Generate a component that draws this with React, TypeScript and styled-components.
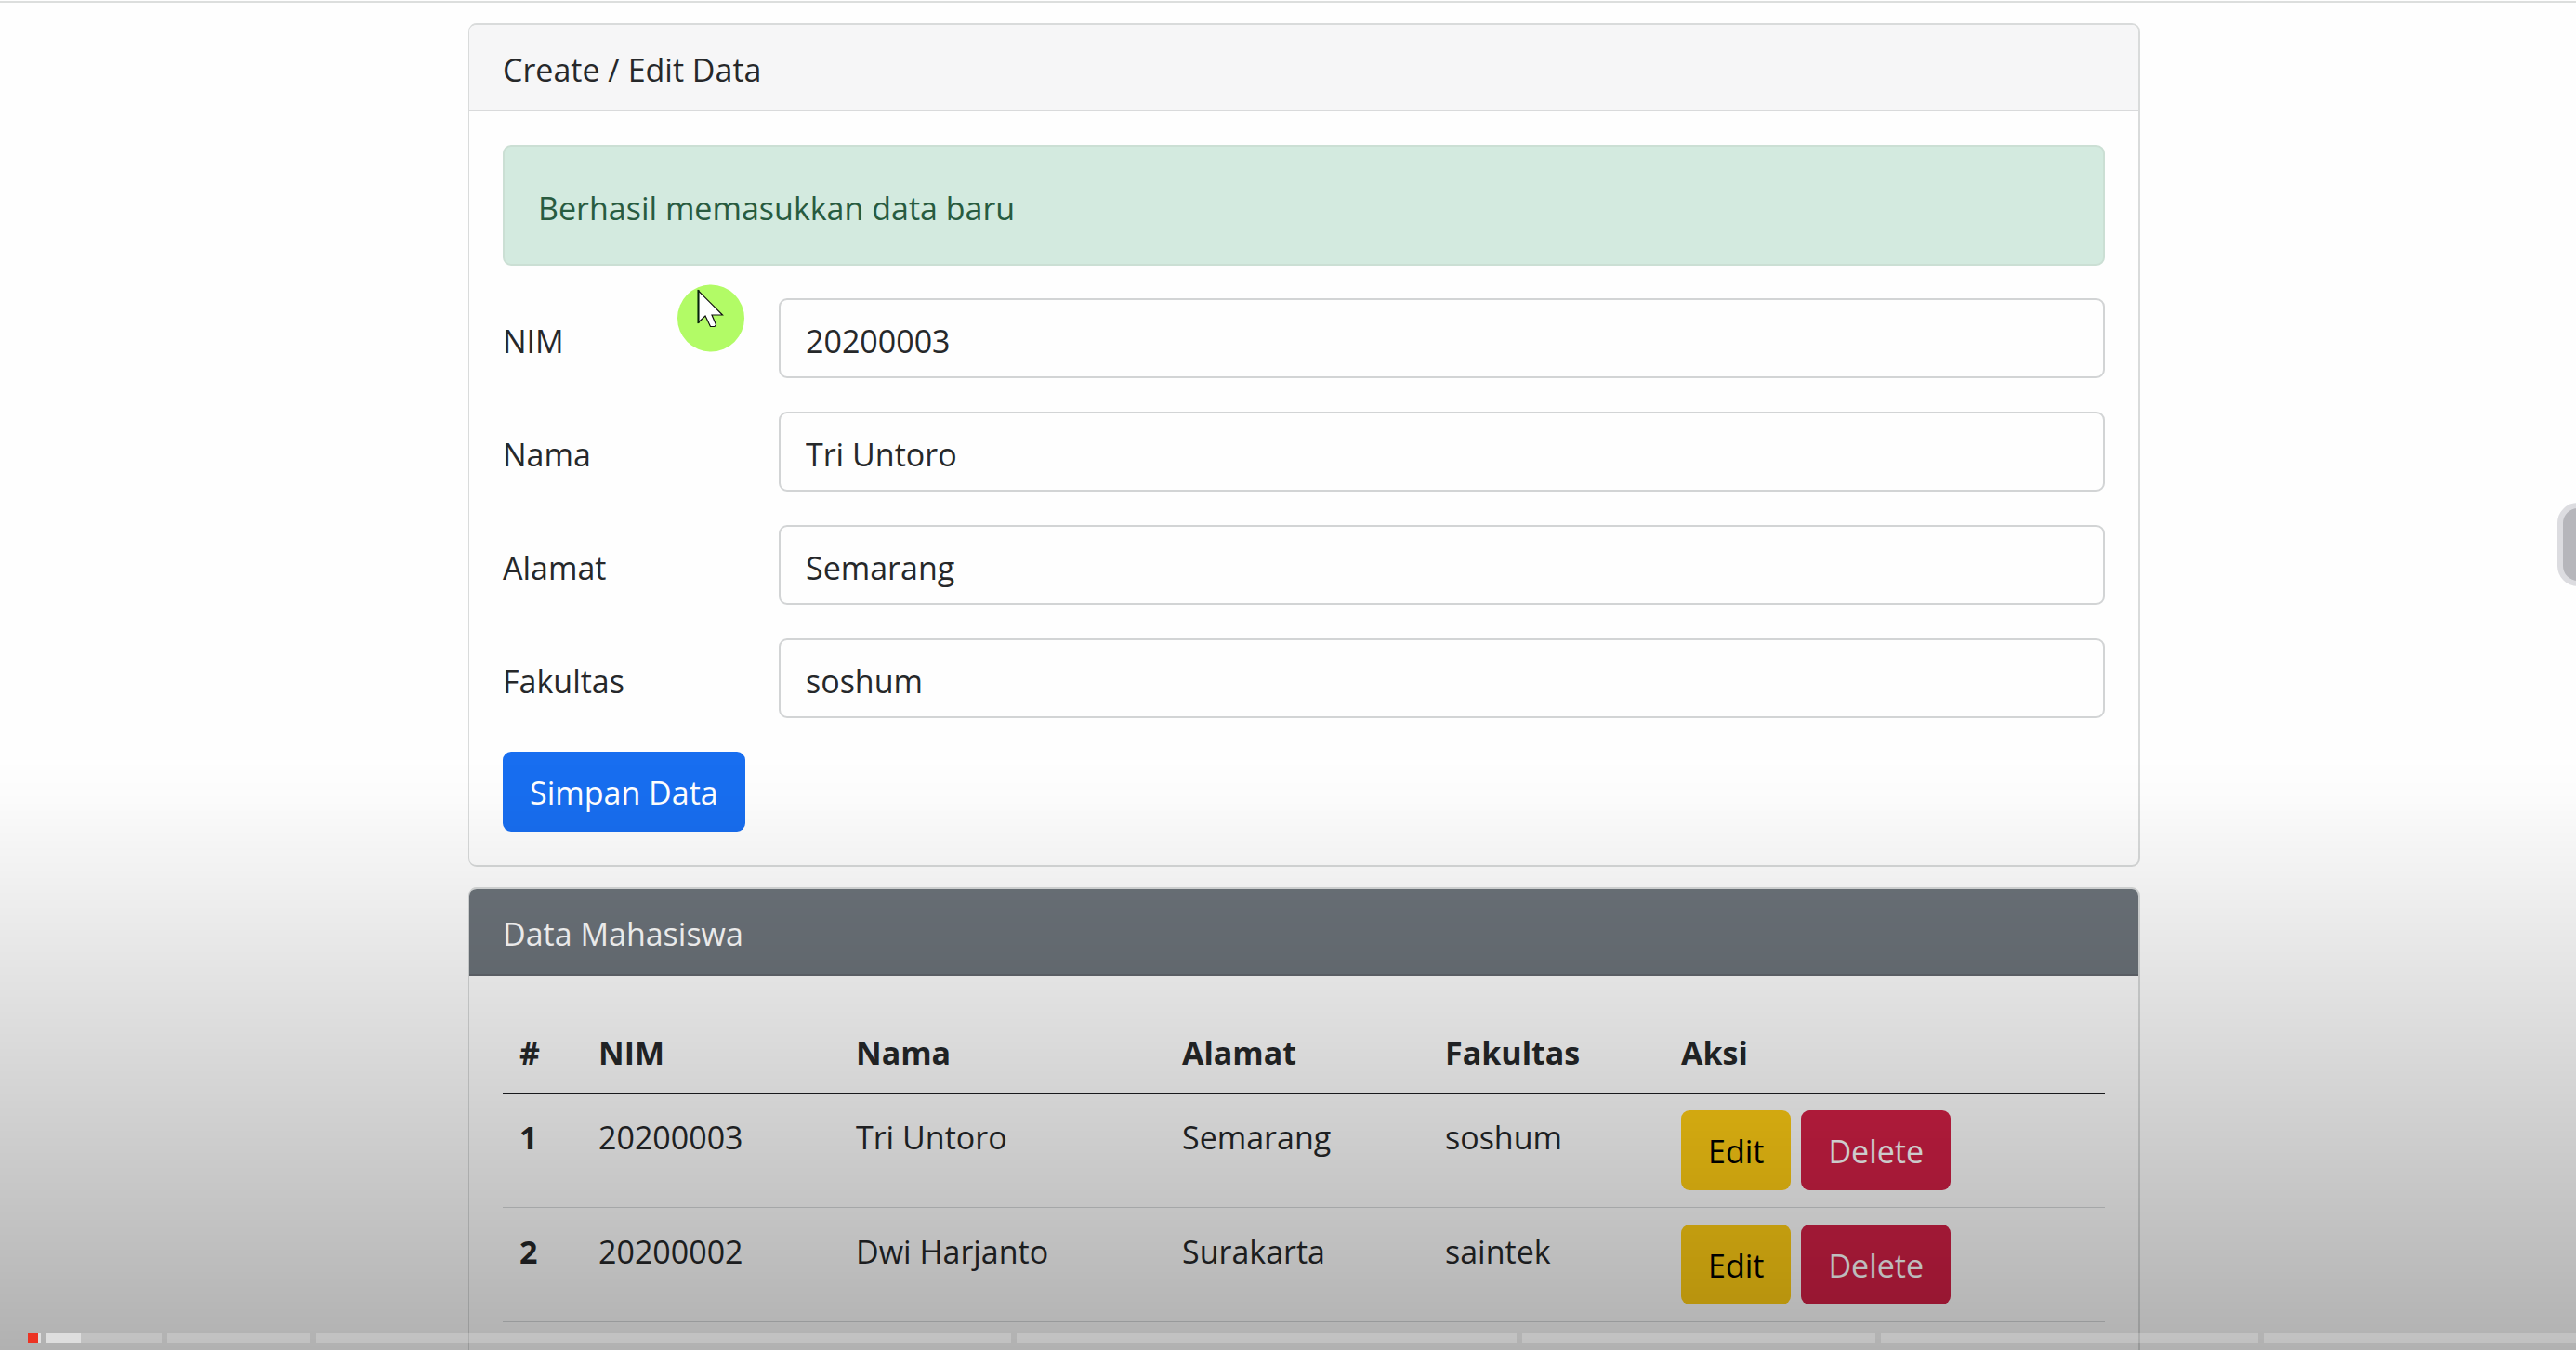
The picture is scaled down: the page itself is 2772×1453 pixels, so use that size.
import React from 'react';
import styled, { createGlobalStyle } from 'styled-components';

const GlobalStyle = createGlobalStyle`
  *, *::before, *::after { box-sizing: border-box; }
  body {
    margin: 0;
    background: #fefefe;
    color: #26282a;
    font-family: 'Open Sans', 'Noto Sans', sans-serif;
    font-size: 34px;
    line-height: 54px;
  }
  button, input { font: inherit; color: inherit; }
`;

const Page = styled.div`
  position: relative;
  height: 100vh;
  overflow: hidden;
  padding: 1px 0 0 35px;
`;

const TopRule = styled.div`
  height: 2px;
  margin: 0 0 22px -35px;
  background: #dcdedd;
`;

const Container = styled.main`
  max-width: 1799px;
  margin: 0 auto;
  display: flex;
  flex-direction: column;
  gap: 22px;
`;

const Card = styled.section`
  border: solid #d9dbdb;
  border-width: 2px 2px 2px 1px;
  border-radius: 9px;
  overflow: hidden;
`;

const CardHeader = styled.header<{ $dark?: boolean }>`
  padding: 21px 36px 16px;
  border-bottom: 2px solid ${(p) => (p.$dark ? '#64686f' : '#d9dadb')};
  background: ${(p) => (p.$dark ? '#6d747b' : '#f6f6f7')};
  color: ${(p) => (p.$dark ? '#ffffff' : 'inherit')};
`;

const CardBody = styled.div`
  padding: 36px;
`;

const Alert = styled.div`
  margin-bottom: 35px;
  padding: 39px 36px 33px;
  border: 2px solid #cbdfd4;
  border-radius: 9px;
  background: #d3eadf;
  color: #285b3f;
`;

const Form = styled.form`
  display: flex;
  flex-direction: column;
  align-items: flex-start;
  gap: 36px;
`;

const Field = styled.div`
  display: flex;
  width: 100%;
`;

const Label = styled.label`
  flex: 0 0 297px;
  padding: 19px 0 13px;
`;

const TextInput = styled.input`
  flex: 1;
  min-width: 0;
  height: 86px;
  padding: 17px 27px 11px;
  border: 2px solid #d2d4d5;
  border-radius: 9px;
  background: transparent;
  outline: none;
`;

const tones = {
  primary: { bg: '#186ef0', fg: '#ffffff' },
  warning: { bg: '#ffcd14', fg: '#000000' },
  danger: { bg: '#d22046', fg: '#ffffff' },
};

const Button = styled.button<{ $tone: keyof typeof tones }>`
  height: 86px;
  padding: 17px 29px 15px;
  border: 0;
  border-radius: 9px;
  background: ${(p) => tones[p.$tone].bg};
  color: ${(p) => tones[p.$tone].fg};
  cursor: pointer;
`;

const Table = styled.table`
  width: 100%;
  table-layout: fixed;
  border-collapse: separate;
  border-spacing: 0;
`;

const Column = styled.col<{ $width?: number }>`
  width: ${(p) => (p.$width ? `${p.$width}px` : 'auto')};
`;

const HeadCell = styled.th`
  padding: 20px 18px 16px;
  border-bottom: 1px solid #1d1f22;
  text-align: left;
  font-weight: 700;
`;

const Cell = styled.td`
  padding: 20px 18px 16px;
  border-bottom: 1px solid #d6d8da;
  vertical-align: top;
`;

const RowHead = styled(Cell)`
  text-align: left;
  font-weight: 700;
`;

const ActionCell = styled(Cell)`
  padding: 18px;
`;

const Actions = styled.div`
  display: flex;
  gap: 11px;
`;

const PointerMark = styled.svg`
  position: absolute;
  left: 729px;
  top: 306px;
  width: 73px;
  height: 73px;
  pointer-events: none;
`;

const EdgeHandle = styled.button`
  position: fixed;
  right: -30px;
  top: 541px;
  width: 50px;
  height: 90px;
  padding: 0;
  border: 6px solid #dcdce0;
  border-radius: 22px;
  background: #b6b6bb;
`;

const Shade = styled.div`
  position: fixed;
  inset: auto 0 0;
  height: 640px;
  pointer-events: none;
  background: linear-gradient(
    rgba(0, 0, 0, 0) 0,
    rgba(0, 0, 0, 0.008) 40px,
    rgba(0, 0, 0, 0.035) 96px,
    rgba(0, 0, 0, 0.302) 100%
  );
`;

const Timeline = styled.div`
  position: fixed;
  left: 30px;
  right: 0;
  bottom: 8px;
  display: flex;
  gap: 6px;
`;

const Chapter = styled.div<{ $span: number }>`
  flex: ${(p) => p.$span} 1 0;
  display: flex;
  height: 10px;
  background: rgba(255, 255, 255, 0.2);
`;

const Played = styled.div`
  width: 11px;
  background: #ec3323;
`;

const Buffered = styled.div<{ $width: number }>`
  width: ${(p) => p.$width}px;
  background: #dedede;
`;

const fields = [
  { id: 'nim', label: 'NIM', value: '20200003' },
  { id: 'nama', label: 'Nama', value: 'Tri Untoro' },
  { id: 'alamat', label: 'Alamat', value: 'Semarang' },
  { id: 'fakultas', label: 'Fakultas', value: 'soshum' },
];

const students = [
  { nim: '20200003', nama: 'Tri Untoro', alamat: 'Semarang', fakultas: 'soshum' },
  { nim: '20200002', nama: 'Dwi Harjanto', alamat: 'Surakarta', fakultas: 'saintek' },
];

const chapters = [154, 748, 538, 380, 406, 336];

export default function App() {
  return (
    <Page>
      <GlobalStyle />
      <TopRule />
      <Container>
        <Card>
          <CardHeader>Create / Edit Data</CardHeader>
          <CardBody>
            <Alert role="alert">Berhasil memasukkan data baru</Alert>
            <Form onSubmit={(e) => e.preventDefault()}>
              {fields.map((f) => (
                <Field key={f.id}>
                  <Label htmlFor={f.id}>{f.label}</Label>
                  <TextInput id={f.id} type="text" spellCheck={false} defaultValue={f.value} />
                </Field>
              ))}
              <Button $tone="primary" type="submit">Simpan Data</Button>
            </Form>
          </CardBody>
        </Card>

        <Card>
          <CardHeader $dark>Data Mahasiswa</CardHeader>
          <CardBody>
            <Table>
              <colgroup>
                <Column $width={85} />
                <Column $width={277} />
                <Column $width={351} />
                <Column $width={283} />
                <Column $width={254} />
                <Column />
              </colgroup>
              <thead>
                <tr>
                  {['#', 'NIM', 'Nama', 'Alamat', 'Fakultas', 'Aksi'].map((h) => (
                    <HeadCell key={h} scope="col">{h}</HeadCell>
                  ))}
                </tr>
              </thead>
              <tbody>
                {students.map((s, i) => (
                  <tr key={s.nim}>
                    <RowHead as="th" scope="row">{i + 1}</RowHead>
                    <Cell>{s.nim}</Cell>
                    <Cell>{s.nama}</Cell>
                    <Cell>{s.alamat}</Cell>
                    <Cell>{s.fakultas}</Cell>
                    <ActionCell>
                      <Actions>
                        <Button $tone="warning" type="button">Edit</Button>
                        <Button $tone="danger" type="button">Delete</Button>
                      </Actions>
                    </ActionCell>
                  </tr>
                ))}
              </tbody>
            </Table>
          </CardBody>
        </Card>
      </Container>

      <PointerMark viewBox="0 0 73 73" aria-hidden="true">
        <circle cx="36" cy="36.5" r="36" fill="#b2fb66" />
        <path
          d="M22.5 7 V41 L30 34 L35.5 45.5 H40 L41.5 43.5 L37 33 H48.5 Z"
          fill="#fff"
          stroke="#111"
          strokeWidth="1.2"
        />
        <path d="M22.5 6 V42" stroke="#06230a" strokeWidth="2" />
      </PointerMark>
      <EdgeHandle type="button" aria-label="Open side panel" />
      <Shade />
      <Timeline>
        <Chapter $span={14}>
          <Played />
          <Buffered $width={3} />
        </Chapter>
        <Chapter $span={124}>
          <Buffered $width={37} />
        </Chapter>
        {chapters.map((span) => (
          <Chapter key={span} $span={span} />
        ))}
      </Timeline>
    </Page>
  );
}
